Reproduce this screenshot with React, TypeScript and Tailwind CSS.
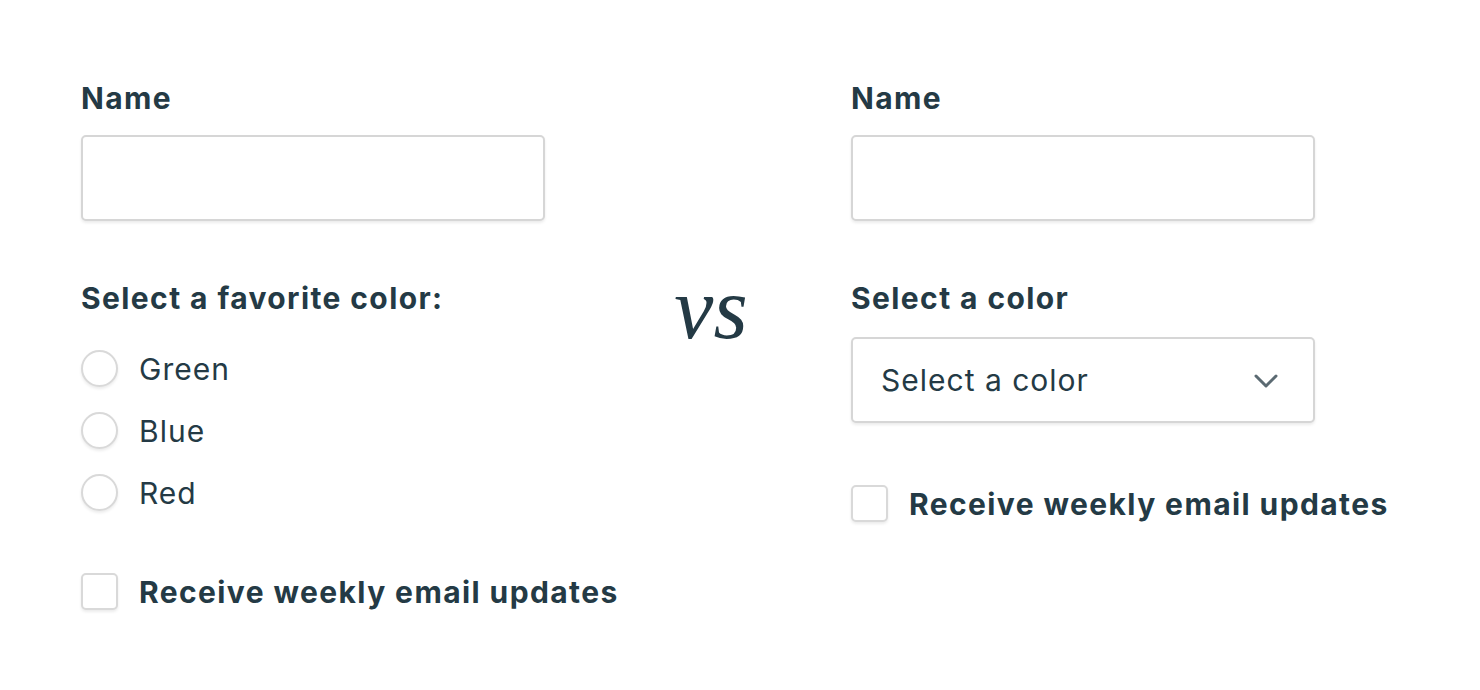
const labelCls = "block text-[30px] leading-[34px] font-bold tracking-[1.4px] text-[#243a45] whitespace-nowrap"
const textCls = "text-[30px] leading-[34px] tracking-[1px] text-[#243a45] whitespace-nowrap"
const boxCls =
  "w-[464px] h-[86px] rounded-[5px] border-2 border-[#d6d6d6] bg-white shadow-[0_2px_3px_rgba(0,0,0,0.08)]"

function Checkbox({ label }: { label: string }) {
  return (
    <label className="flex items-center gap-[21px]">
      <span className="shrink-0 w-[37px] h-[37px] rounded-[5px] border-2 border-[#d9d9d9] bg-white shadow-[0_2px_3px_rgba(0,0,0,0.08)]" />
      <span className={labelCls}>{label}</span>
    </label>
  )
}

function Radio({ label }: { label: string }) {
  return (
    <label className="flex items-center gap-[21px] h-[37px]">
      <span className="shrink-0 w-[37px] h-[37px] rounded-full border-2 border-[#d9d9d9] bg-white shadow-[0_2px_3px_rgba(0,0,0,0.08)]" />
      <span className={textCls}>{label}</span>
    </label>
  )
}

export default function App() {
  return (
    <div className="w-[1480px] h-[690px] bg-white flex pl-[81px] pt-[81px] font-['Inter',sans-serif]">
      {/* classic form */}
      <div className="w-[464px] shrink-0 flex flex-col">
        <span className={labelCls}>Name</span>
        <div className={`${boxCls} mt-[20px]`} />
        <span className={`${labelCls} mt-[60px]`}>Select a favorite color:</span>
        <div className="mt-[35px] flex flex-col gap-[25px]">
          <Radio label="Green" />
          <Radio label="Blue" />
          <Radio label="Red" />
        </div>
        <div className="mt-[62px]">
          <Checkbox label="Receive weekly email updates" />
        </div>
      </div>

      <div className="w-[306px] shrink-0 flex justify-center pt-[184px] pl-[26px]">
        <span className="font-['Liberation_Serif',serif] italic text-[88px] leading-[88px] text-[#243a45]">vs</span>
      </div>

      {/* compact form */}
      <div className="w-[464px] shrink-0 flex flex-col">
        <span className={labelCls}>Name</span>
        <div className={`${boxCls} mt-[20px]`} />
        <span className={`${labelCls} mt-[60px]`}>Select a color</span>
        <div className={`${boxCls} mt-[22px] flex items-center justify-between pl-[28px] pr-[35px]`}>
          <span className={textCls}>Select a color</span>
          <svg width="24" height="15" viewBox="0 0 24 15" fill="none" className="mt-[2px]">
            <polyline points="2,2 12,12 22,2" stroke="#5b6a72" strokeWidth="3" strokeLinecap="round" strokeLinejoin="round" />
          </svg>
        </div>
        <div className="mt-[62px]">
          <Checkbox label="Receive weekly email updates" />
        </div>
      </div>
    </div>
  )
}
